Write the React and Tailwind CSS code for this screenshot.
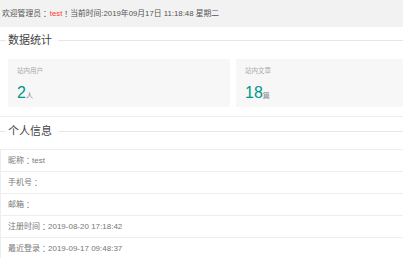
/**
 * App.jsx
 * Admin dashboard welcome panel: stats cards + personal info list.
 */

// full-width punctuation, centred in its em box (TC glyphs sit in the middle)
const P = ({ c }) => (
  <span className="inline-block w-[1em] text-center font-['Noto_Sans_CJK_TC',sans-serif]">{c}</span>
);

const Legend = ({ title, className = "" }) => (
  <div className={`flex items-center h-[14px] ${className}`}>
    <div className="w-[6px] h-px bg-[#e6e6e6]" />
    <span className="ml-[2px] mr-[6px] text-[11px] leading-[14px] text-[#444]">{title}</span>
    <div className="flex-1 h-px bg-[#e6e6e6]" />
  </div>
);

const StatCard = ({ label, value, unit, className = "" }) => (
  <div className={`bg-[#f7f7f7] h-[48px] pl-[9px] ${className}`}>
    <div className="mt-[8px] h-[8px] text-[6.5px] leading-[8px] text-[#aaa]">{label}</div>
    <div className="mt-[10px] flex items-end h-[16px] leading-[16px]">
      <span className="text-[16px] text-[#009688]">{value}</span>
      <span className="text-[7px] leading-[10px] text-[#888]">{unit}</span>
    </div>
  </div>
);

const rows = [
  ["昵称", "test"],
  ["手机号", ""],
  ["邮箱", ""],
  ["注册时间", "2019-08-20 17:18:42"],
  ["最近登录", "2019-09-17 09:48:37"],
];

export default function App() {
  return (
    <div className="w-[403px] h-[258px] overflow-hidden bg-white font-['Liberation_Sans','Noto_Sans_CJK_SC',sans-serif]">
      {/* Welcome bar */}
      <div className="h-[27px] bg-[#f2f2f2] flex items-center pl-[2px] text-[7.8px] text-[#555] whitespace-nowrap">
        欢迎管理员<P c="：" />
        <span className="text-[#ff3b30] ml-[1px]">test</span>
        <P c="！" />当前时间:2019年09月17日 11:18:48 星期二
      </div>

      {/* Stats */}
      <Legend title="数据统计" className="mt-[6px]" />
      <div className="flex gap-[6px] pl-[8px] mt-[12px]">
        <StatCard label="站内用户" value="2" unit="人" className="w-[222px]" />
        <StatCard label="站内文章" value="18" unit="篇" className="flex-1" />
      </div>

      <div className="mt-[9px] border-t border-[#eee]" />

      {/* Personal info */}
      <Legend title="个人信息" className="mt-[7px]" />
      <div className="mt-[11px] border-l border-[#eee]">
        {rows.map(([k, v]) => (
          <div
            key={k}
            className="h-[22px] border-t border-[#eee] pl-[7px] flex items-center text-[8px] text-[#777] whitespace-pre"
          >
            {k}
            <P c="：" />
            {v}
          </div>
        ))}
      </div>
    </div>
  );
}
